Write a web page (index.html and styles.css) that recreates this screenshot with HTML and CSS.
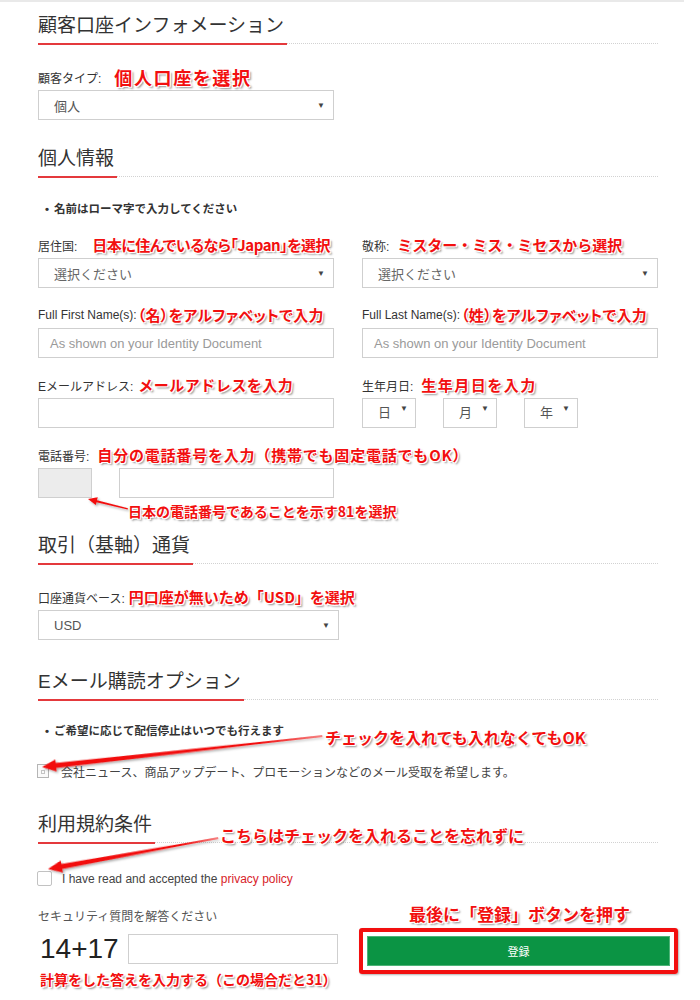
FILE: index.html
```html
<!DOCTYPE html>
<html lang="ja">
<head>
<meta charset="utf-8">
<title>顧客口座インフォメーション</title>
<link rel="stylesheet" href="styles.css">
</head>
<body>
<div class="topline"></div>
<main class="form">
  <div class="sec-head first"><h2>顧客口座インフォメーション</h2></div>
  <div class="after-head half">
    <div class="lbl">顧客タイプ:<span class="note note-lg">個人口座を選択</span></div>
    <div class="select"><span>個人</span><i class="caret">▼</i></div>
  </div>

  <div class="sec-head"><h2>個人情報</h2></div>
  <div class="bullet"><span class="dot">•</span>名前はローマ字で入力してください</div>

  <div class="row">
    <div>
      <div class="lbl">居住国:<span class="note note-japan">日本に住んでいるなら「Japan」を選択</span></div>
      <div class="select"><span class="muted">選択ください</span><i class="caret">▼</i></div>
    </div>
    <div>
      <div class="lbl">敬称:<span class="note">ミスター・ミス・ミセスから選択</span></div>
      <div class="select"><span class="muted">選択ください</span><i class="caret">▼</i></div>
    </div>
  </div>

  <div class="row">
    <div>
      <div class="lbl">Full First Name(s):<span class="note note-name">（名）をアルファベットで入力</span></div>
      <div class="input placeholder">As shown on your Identity Document</div>
    </div>
    <div>
      <div class="lbl">Full Last Name(s):<span class="note note-name">（姓）をアルファベットで入力</span></div>
      <div class="input placeholder">As shown on your Identity Document</div>
    </div>
  </div>

  <div class="row">
    <div>
      <div class="lbl">Eメールアドレス:<span class="note note-mail">メールアドレスを入力</span></div>
      <div class="input"></div>
    </div>
    <div>
      <div class="lbl">生年月日:<span class="note note-spaced">生年月日を入力</span></div>
      <div class="dates">
        <div class="select sel-sm"><span>日</span><i class="caret">▼</i></div>
        <div class="select sel-sm"><span>月</span><i class="caret">▼</i></div>
        <div class="select sel-sm"><span>年</span><i class="caret">▼</i></div>
      </div>
    </div>
  </div>

  <div class="row">
    <div>
      <div class="lbl">電話番号:<span class="note note-tel">自分の電話番号を入力（携帯でも固定電話でもOK）</span></div>
      <div class="phone">
        <div class="code"></div>
        <div class="input phone-num"></div>
      </div>
    </div>
  </div>

  <div class="sec-head sec-currency"><h2>取引（基軸）通貨</h2></div>
  <div class="after-head currency">
    <div class="lbl">口座通貨ベース:<span class="note note-usd">円口座が無いため「USD」を選択</span></div>
    <div class="select"><span>USD</span><i class="caret">▼</i></div>
  </div>

  <div class="sec-head sec-mail"><h2>Eメール購読オプション</h2></div>
  <div class="bullet bullet-mail"><span class="dot">•</span>ご希望に応じて配信停止はいつでも行えます</div>
  <div class="check-row check-news"><span class="chk-small"><span></span></span><span>会社ニュース、商品アップデート、プロモーションなどのメール受取を希望します。</span></div>

  <div class="sec-head sec-terms"><h2>利用規約条件</h2></div>
  <div class="check-row check-terms"><span class="chk"></span><span>I have read and accepted the <a class="link">privacy policy</a></span></div>

  <div class="security">
    <div class="sec-left">
      <div class="lbl lbl-q">セキュリティ質問を解答ください</div>
      <div class="captcha-row">
        <span class="captcha">14+17</span>
        <div class="input captcha-input"></div>
      </div>
    </div>
    <div class="sec-right">
      <div class="note note-btn">最後に「登録」ボタンを押す</div>
      <div class="btn-frame"><div class="btn">登録</div></div>
    </div>
  </div>
</main>

<span class="note float note-phone">日本の電話番号であることを示す81を選択</span>
<span class="note float note-check">チェックを入れても入れなくてもOK</span>
<span class="note float note-terms">こちらはチェックを入れることを忘れずに</span>
<span class="note float note-calc">計算をした答えを入力する（この場合だと31）</span>

<svg class="overlay" width="700" height="1000" viewBox="0 0 700 1000">
  <defs>
    <filter id="sh" x="-10%" y="-50%" width="120%" height="200%">
      <feDropShadow dx="1.5" dy="1.5" stdDeviation="1" flood-color="#000" flood-opacity="0.35"/>
    </filter>
  </defs>
  <g fill="#f20f0f" filter="url(#sh)">
    <path transform="translate(88 499) rotate(14)" d="M0 0 L9 -4 L9 -1 L41 -0.6 L41 0.6 L9 1 L9 4 Z"/>
    <path transform="translate(42 767) rotate(-6.3)" d="M0 0 L14 -6 L14 -2.5 L282 -0.6 L282 0.6 L14 2.5 L14 6 Z"/>
    <path transform="translate(48 869) rotate(-10.3)" d="M0 0 L14 -6 L14 -2.5 L173 -0.6 L173 0.6 L14 2.5 L14 6 Z"/>
  </g>
  <path d="M34 966 L343 966" stroke="#f20f0f" stroke-width="3" stroke-linecap="round" filter="url(#sh)"/>
</svg>
</body>
</html>
```

FILE: styles.css
```css
* { box-sizing: border-box; }

body {
  margin: 0;
  width: 700px;
  height: 1000px;
  overflow: hidden;
  position: relative;
  background: #fff;
  color: #333;
  font-family: "Liberation Sans", "Noto Sans CJK JP", sans-serif;
}

.topline {
  width: 684px;
  height: 2px;
  background: #e9e9e9;
}

.form {
  width: 620px;
  margin-left: 38px;
  padding-top: 10px;
}

/* section headings */
.sec-head {
  display: flex;
  align-items: flex-end;
  margin-top: 25px;
}
.sec-head.first { margin-top: 0; }
.sec-head h2 {
  margin: 0;
  font-size: 19px;
  font-weight: 400;
  line-height: 28px;
  padding: 0 3px 3px 0;
  border-bottom: 2px solid #e4393c;
  color: #333;
  white-space: nowrap;
}
.sec-head::after {
  content: "";
  flex: 1;
  border-bottom: 1px dotted #d2d2d2;
  margin-bottom: 1px;
}
.sec-currency { margin-top: 34px; }
.sec-mail { margin-top: 28px; }
.sec-terms { margin-top: 31px; }

.after-head { margin-top: 23px; }
.half { width: 296px; }
.currency { width: 301px; }

/* labels */
.lbl {
  display: flex;
  align-items: center;
  height: 18px;
  margin-bottom: 4px;
  font-size: 12px;
  color: #333;
  white-space: nowrap;
}

/* red annotations */
.note {
  color: #f20f0f;
  font-family: "Noto Sans CJK JP", sans-serif;
  font-weight: 700;
  font-size: 15px;
  line-height: 18px;
  margin-left: 8px;
  white-space: nowrap;
  text-shadow: -1px -1px 0 #fff, 1px -1px 0 #fff, -1px 1px 0 #fff, 1px 1px 0 #fff,
    2px 2px 2px rgba(0, 0, 0, 0.45);
}
.note-lg { font-size: 18px; letter-spacing: 1.6px; margin-left: 13px; }
.note-spaced { letter-spacing: 1.5px; }
.note-japan { margin-left: 15px; font-feature-settings: "palt"; letter-spacing: -0.5px; }
.note-name { margin-left: 1px; font-feature-settings: "palt"; letter-spacing: 0.3px; }
.note-mail { margin-left: 5px; letter-spacing: 0.5px; }
.note-tel { letter-spacing: 0.8px; }
.note-usd { margin-left: 4px; }

.float {
  position: absolute;
  margin: 0;
  line-height: 20px;
}
.note-phone { left: 128px; top: 501px; font-size: 14px; }
.note-check { left: 325px; top: 727px; font-size: 16px; }
.note-terms { left: 220px; top: 825px; font-size: 16px; }
.note-calc { left: 40px; top: 969px; font-size: 14px; }

/* controls */
.select {
  display: flex;
  align-items: center;
  justify-content: space-between;
  height: 30px;
  padding: 0 8px 0 15px;
  border: 1px solid #cfcfcf;
  background: #fff;
  font-size: 13px;
  color: #555;
}
.muted { color: #666; }
.caret {
  font-style: normal;
  font-size: 8px;
  color: #444;
}

.input {
  display: flex;
  align-items: center;
  height: 30px;
  padding-left: 11px;
  border: 1px solid #cfcfcf;
  background: #fff;
  font-size: 13px;
}
.placeholder { color: #9a9a9a; }

.bullet {
  margin-top: 22px;
  padding-left: 7px;
  line-height: 18px;
  font-size: 11.5px;
  font-weight: 700;
  color: #333;
}
.bullet .dot { margin-right: 5px; }
.bullet-mail { margin-top: 21px; }

.row {
  display: grid;
  grid-template-columns: 296px 296px;
  column-gap: 28px;
  margin-top: 18px;
}

.dates {
  display: flex;
  gap: 27px;
}
.sel-sm {
  width: 54px;
  align-items: flex-start;
  padding: 0 7px 0 15px;
}
.sel-sm span { line-height: 28px; }
.sel-sm .caret { line-height: 20px; }

.phone {
  display: flex;
  gap: 27px;
}
.code {
  width: 54px;
  height: 30px;
  background: #ececec;
  border: 1px solid #cfcfcf;
}
.phone-num { width: 215px; }

/* checkboxes */
.check-row {
  display: flex;
  align-items: center;
  font-size: 12px;
  color: #444;
  white-space: nowrap;
}
.check-news {
  margin-top: 22px;
  margin-left: -1px;
  height: 18px;
  gap: 12px;
}
.chk-small {
  width: 12px;
  height: 14px;
  border: 1px solid #b5b5b5;
  background: #fafafa;
  display: flex;
  align-items: flex-end;
  justify-content: center;
  padding-bottom: 3px;
}
.chk-small span {
  width: 4px;
  height: 4px;
  border: 1px solid #c4c4c4;
}
.check-terms {
  margin-top: 27px;
  margin-left: -1px;
  gap: 10px;
}
.chk {
  width: 15px;
  height: 15px;
  border: 1px solid #c2c2c2;
  border-radius: 2px;
  background: #fff;
}
.link { color: #d8232a; text-decoration: none; }

/* security */
.security {
  display: flex;
  width: 640px;
  gap: 21px;
  margin-top: 18px;
}
.sec-left {
  width: 300px;
  padding-top: 2px;
}
.lbl-q {
  color: #555;
  margin-bottom: 9px;
}
.captcha-row {
  display: flex;
  align-items: center;
}
.captcha {
  width: 90px;
  padding-left: 2px;
  font-size: 28px;
  color: #222;
}
.captcha-input { width: 210px; }

.sec-right { width: 319px; }
.note-btn {
  margin: 0 0 4px 50px;
  font-size: 17px;
  line-height: 20px;
}
.btn-frame {
  border: 4px solid #f20f0f;
  border-radius: 3px;
  padding: 4px;
  box-shadow: 1px 1px 2px rgba(0, 0, 0, 0.3);
}
.btn {
  height: 30px;
  display: flex;
  align-items: center;
  justify-content: center;
  background: #0b9444;
  border: 1px solid #4db377;
  color: #fff;
  font-size: 11px;
}

.overlay {
  position: absolute;
  left: 0;
  top: 0;
  pointer-events: none;
}
```
